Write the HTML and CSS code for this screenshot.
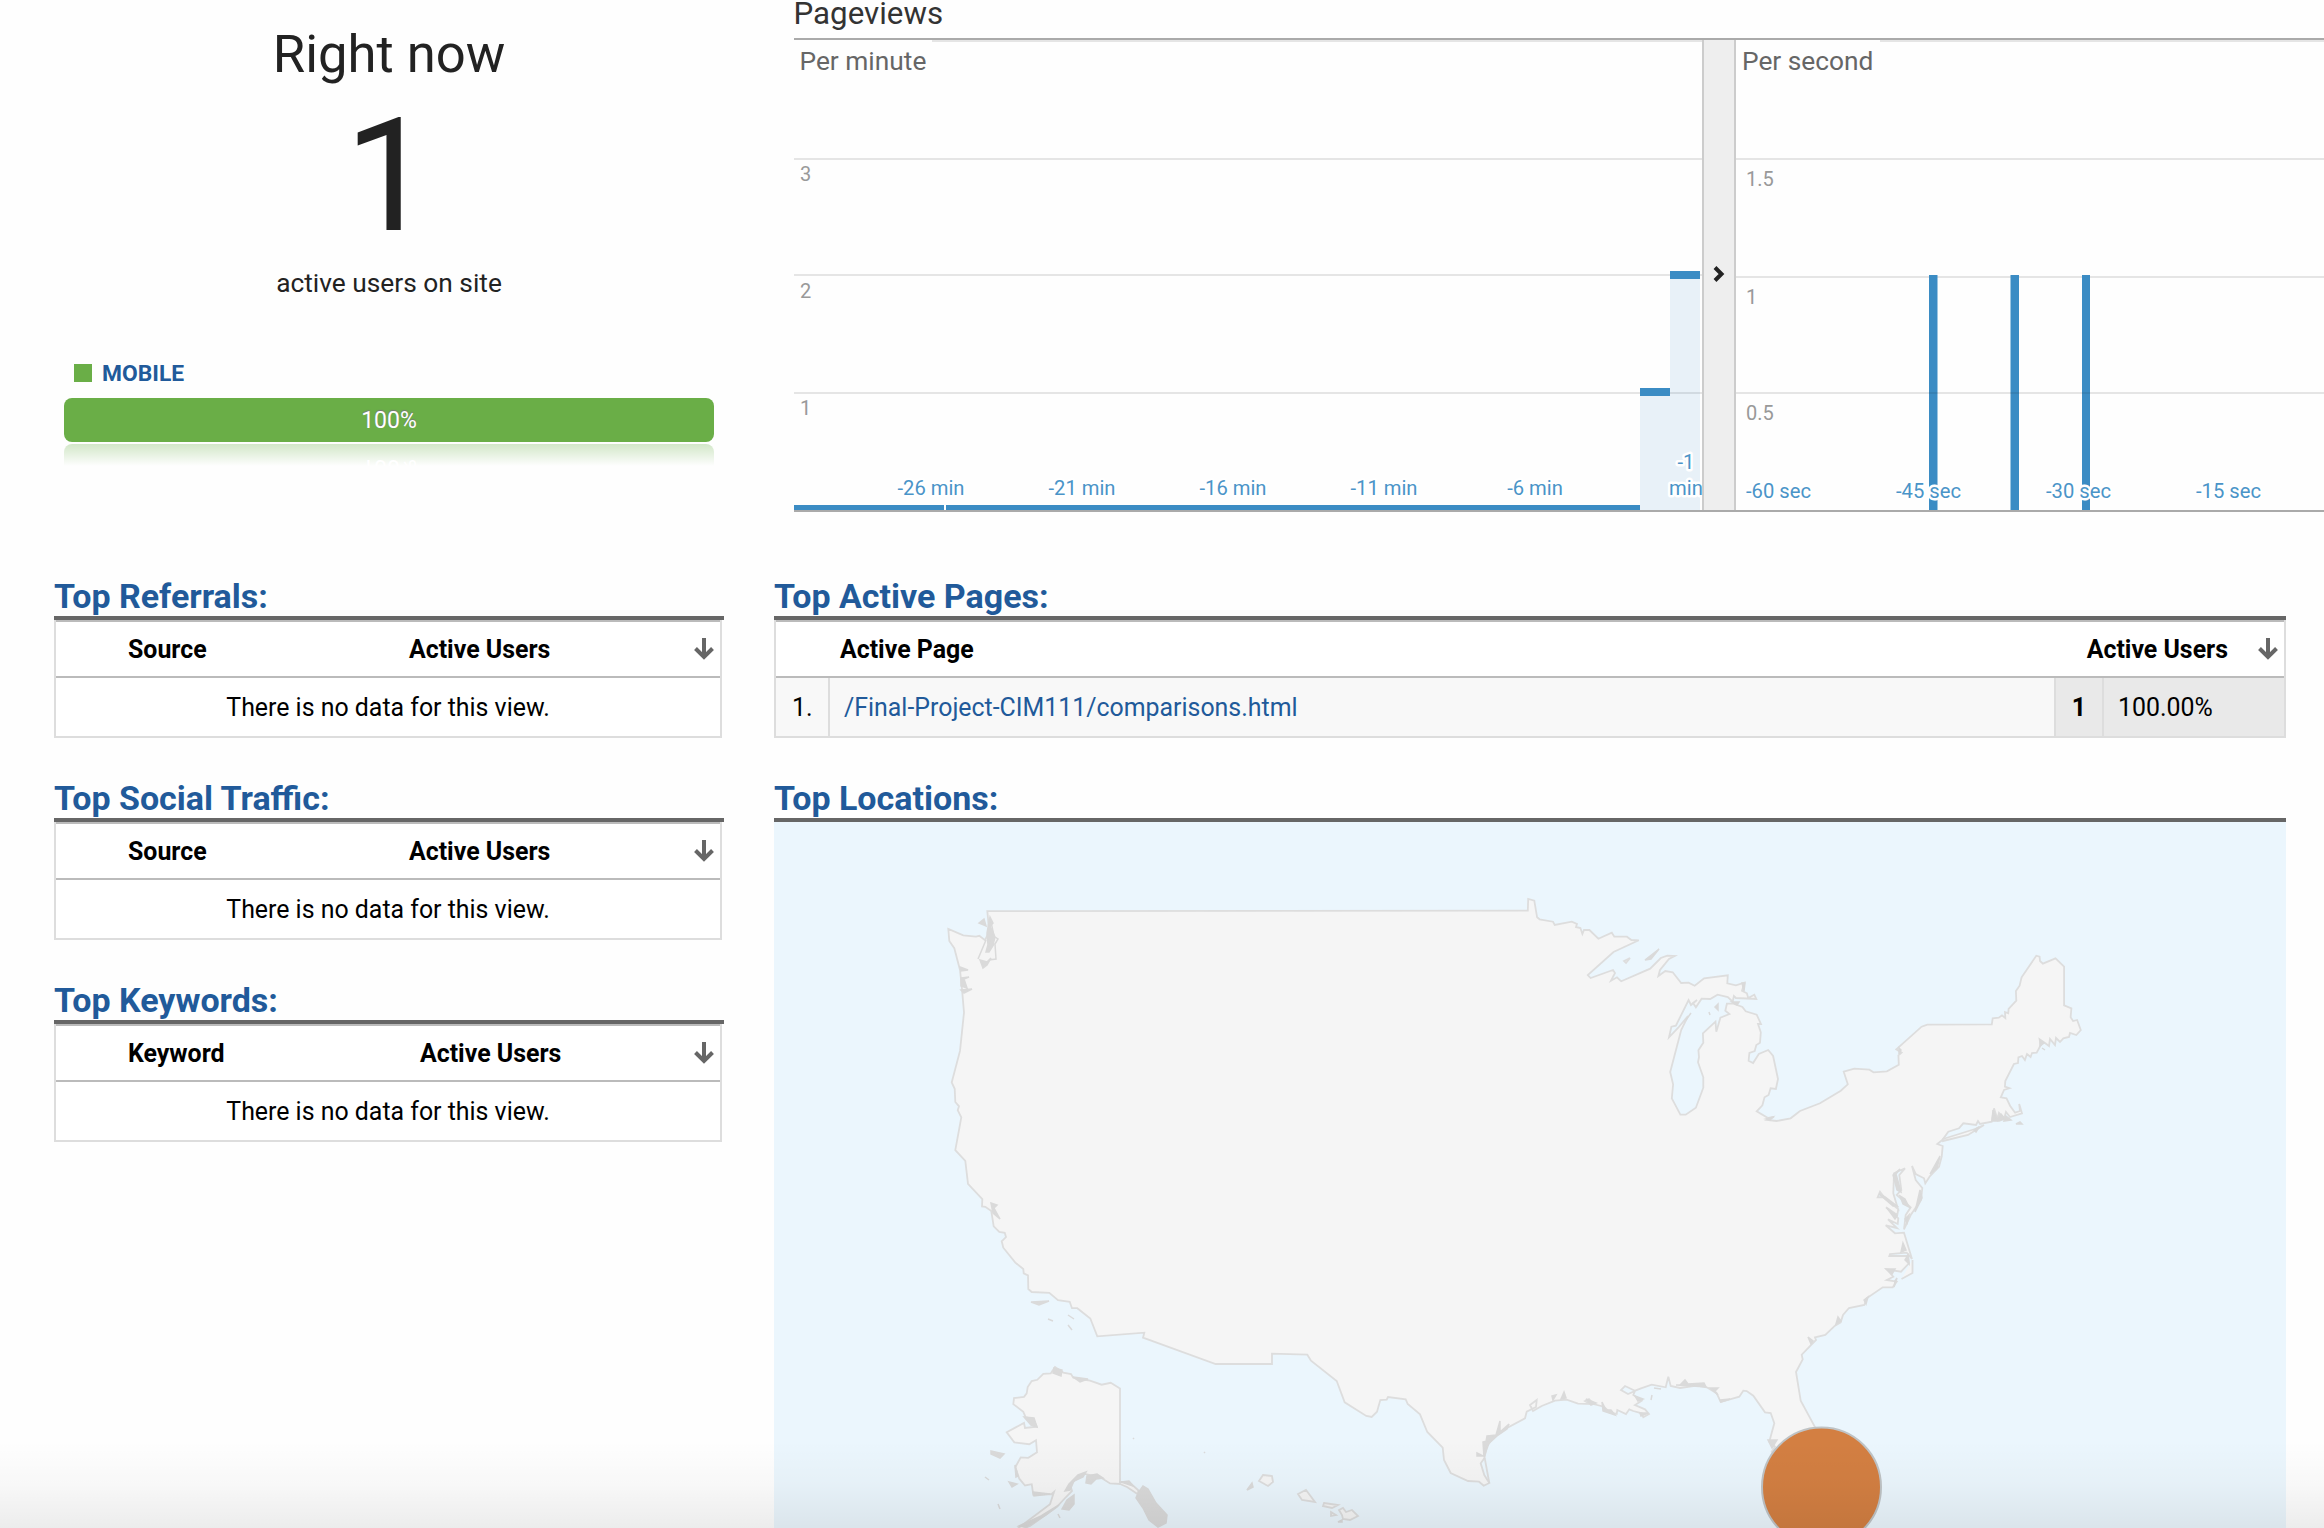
FILE: index.html
```html
<!DOCTYPE html>
<html lang="en">
<head>
<meta charset="utf-8">
<title>Real-time overview</title>
<link rel="stylesheet" href="styles.css">
</head>
<body>
<svg class="defs" width="0" height="0">
  <symbol id="sort" viewBox="0 0 20 22">
    <path d="M10 0v19M1.500 10.500L10 19l8.500-8.500" fill="none" stroke="#666" stroke-width="4"/>
  </symbol>
</svg>
<div class="top">
  <section class="now">
    <div class="now-title">Right now</div>
    <div class="now-count">1</div>
    <div class="now-sub">active users on site</div>
    <div class="legend"><span class="swatch"></span>MOBILE</div>
    <div class="bar">100%</div>
    <div class="reflection"><span>100%</span></div>
  </section>
  <section class="pageviews">
    <svg class="chart" viewBox="794 0 1530 560" width="1530" height="560">
      <text class="c-title" x="793.500" y="24">Pageviews</text>
      <g fill="#e5e5e5">
        <rect x="932" y="40" width="770" height="2"/><rect x="1880" y="40" width="444" height="2"/>
        <rect x="794" y="158" width="908" height="2"/><rect x="794" y="274" width="908" height="2"/><rect x="794" y="392" width="908" height="2"/>
        <rect x="1736" y="158" width="588" height="2"/><rect x="1736" y="276" width="588" height="2"/><rect x="1736" y="392" width="588" height="2"/>
      </g>
      <rect x="1640" y="392" width="30" height="118" fill="#3b8cc4" opacity=".11"/>
      <rect x="1670" y="275" width="30" height="235" fill="#3b8cc4" opacity=".11"/>
      <g fill="#3b8cc4">
        <rect x="1640" y="388" width="30" height="8"/><rect x="1670" y="271" width="30" height="8"/>
        <rect x="794" y="505" width="150" height="5"/><rect x="946" y="505" width="694" height="5"/>
        <rect x="1929" y="275" width="8.500" height="235"/><rect x="2010.500" y="275" width="8.500" height="235"/><rect x="2082" y="275" width="8" height="235"/>
      </g>
      <g fill="#000" opacity=".08">
        <rect x="1929" y="392" width="8.500" height="2"/><rect x="2010.500" y="392" width="8.500" height="2"/><rect x="2082" y="392" width="8" height="2"/>
      </g>
      <g class="c-sub"><text x="799.500" y="70">Per minute</text><text x="1742" y="70">Per second</text></g>
      <g class="c-y">
        <text x="800" y="181">3</text><text x="800" y="298">2</text><text x="800" y="415">1</text>
        <text x="1746" y="186">1.5</text><text x="1746" y="304">1</text><text x="1746" y="420">0.5</text>
      </g>
      <g class="c-x mid">
        <text x="931" y="495">-26 min</text><text x="1082" y="495">-21 min</text><text x="1233" y="495">-16 min</text><text x="1384" y="495">-11 min</text><text x="1535" y="495">-6 min</text>
        <text x="1686" y="469">-1</text><text x="1686" y="495">min</text>
      </g>
      <g class="c-x">
        <text x="1746" y="498">-60 sec</text><text x="1896" y="498">-45 sec</text><text x="2046" y="498">-30 sec</text><text x="2196" y="498">-15 sec</text>
      </g>
      <rect x="1702" y="40" width="34" height="470" fill="#ccc"/><rect x="1704" y="40" width="30" height="470" fill="#eee"/>
      <path d="M1715 267.500l6.500 6.500l-6.500 6.500" fill="none" stroke="#222" stroke-width="4"/>
      <g fill="#aaa"><rect x="794" y="38" width="1530" height="2"/><rect x="794" y="510" width="1530" height="2"/></g>
    </svg>
  </section>
</div>
<div class="columns">
  <div class="col-left">
    <section class="panel">
      <h2>Top Referrals:</h2>
      <div class="table">
        <div class="head"><span class="dim">Source</span><span class="metric">Active Users</span><svg class="sort"><use href="#sort"/></svg></div>
        <div class="empty">There is no data for this view.</div>
      </div>
    </section>
    <section class="panel">
      <h2>Top Social Traffic:</h2>
      <div class="table">
        <div class="head"><span class="dim">Source</span><span class="metric">Active Users</span><svg class="sort"><use href="#sort"/></svg></div>
        <div class="empty">There is no data for this view.</div>
      </div>
    </section>
    <section class="panel">
      <h2>Top Keywords:</h2>
      <div class="table">
        <div class="head keyword"><span class="dim">Keyword</span><span class="metric">Active Users</span><svg class="sort"><use href="#sort"/></svg></div>
        <div class="empty">There is no data for this view.</div>
      </div>
    </section>
  </div>
  <div class="col-right">
    <section class="panel">
      <h2>Top Active Pages:</h2>
      <div class="table">
        <div class="head pages"><span>Active Page</span><span class="metric">Active Users</span><svg class="sort"><use href="#sort"/></svg></div>
        <div class="row"><span class="idx">1.</span><a class="link">/Final-Project-CIM111/comparisons.html</a><b class="num">1</b><span class="pct">100.00%</span></div>
      </div>
    </section>
    <section class="panel">
      <h2>Top Locations:</h2>
      <svg class="map" viewBox="774 822 1512 706" width="1512" height="706">
        <rect x="774" y="822" width="1512" height="706" fill="#ebf6fd"/>
        <g fill="#f5f5f5" stroke="#ddd" stroke-width="1.800">
          <!-- contiguous states -->
          <path d="M987.300 911.100L1527.800 910.700 1528.200 899 1534.300 900.700 1537.100 917.300 1539.600 919.300 1553 921.700 1554.700 925 1571.800 921.700 1577 924 1576 927 1580.400 928 1582.400 934 1584 930 1589.400 930 1598.400 938.700 1611.800 932.700 1614.300 936.700 1626.900 936.700 1631.400 940 1638.800 940.300 1613.500 952 1587.800 975 1590.600 978 1613 970 1615 973 1611 980.700 1617 977.300 1621.200 981.300 1650.200 968.700 1660.800 958 1667.300 955.700 1674.700 956 1669 959 1660 970 1658.400 976 1665.300 971 1672.700 972.300 1681.200 983 1688.600 982.700 1694.700 985.700 1704.100 978.300 1727.800 975.300 1727.300 983.300 1735.900 985.300 1744.500 982.700 1742 990.700 1746.900 993.300 1748.200 998 1754.300 994.700 1756.300 999 1735.900 998 1733.900 996 1732.700 1001.700 1727.800 997 1717.600 994.700 1710.200 999 1701.600 998.700 1695.900 1007.300 1693 1003 1697 1000 1691 1005 1688.600 1000 1675.900 1025.700 1671.400 1026.700 1669 1037.300 1678 1028 1688 1016 1681.200 1030 1670.200 1072 1673.100 1084.300 1671.800 1098.300 1680.400 1114.700 1685.700 1114.700 1695.900 1107.700 1703.300 1087.700 1703.300 1077.300 1698 1062.300 1699 1057 1698.400 1050.300 1703.300 1042.700 1702.900 1033.300 1715.500 1021.700 1716.300 1031.700 1720.400 1017.700 1729.400 1014 1725.300 1010.700 1726.900 1003.700 1732.700 1003.300 1742.400 1007 1745.700 1011.300 1756.700 1014.700 1761 1024 1758 1024 1760.800 1032.300 1760 1042.700 1756.300 1045 1754.700 1051 1749.400 1053 1748.600 1060.700 1753.100 1063 1758.800 1054 1768.200 1050 1773.100 1056 1778 1079 1775.900 1089 1770.600 1088.300 1768.600 1095 1764.500 1097.300 1762.400 1105.300 1756.700 1111.300 1768 1118 1774 1117 1767.300 1120 1776.700 1121 1790.600 1118.300 1800 1111 1820 1103.300 1840.800 1090.700 1847.800 1084.300 1843.700 1071.700 1854.300 1068.700 1869.400 1069.700 1873.500 1072.300 1886.900 1071.300 1898.800 1064.700 1898.400 1055.300 1901.600 1052.700 1896.300 1049.300 1921.600 1026.700 1927.300 1024.700 1991.800 1024.300 1992.700 1018.300 1998.800 1017.700 2002 1015.300 2005.300 1018 2005 1012 2008.200 1013.300 2008.600 1009 2016.300 1000.700 2015.900 991 2019.600 985.700 2021.600 977.300 2036.300 955.700 2039.600 956.700 2040 961 2042.900 963.700 2055.500 958.300 2064.100 966.700 2064.100 1005.300 2071.400 1008.300 2070.600 1017.300 2073.100 1021 2077.100 1020 2080.800 1030 2076.300 1035 2070 1033 2069 1037 2063.300 1038.300 2060 1042 2056 1038 2055 1045 2050 1039 2049 1046 2045 1043 2039.600 1039.300 2040.800 1045 2036.700 1052.700 2032 1053 2030.600 1057 2027 1054 2024.900 1060 2022 1056 2018.400 1057.300 2018 1063 2013.900 1064 2005.300 1081 2004.900 1086.700 2009.400 1088.300 2004 1090 2000.800 1097.300 2006.500 1098.300 2010.200 1106 2015.100 1112.700 2020 1111 2019.200 1104 2022 1113.300 2010 1117 2006 1112 2004 1119 1999 1113 1997.300 1119 1994 1108.300 1991.700 1121.700 1980 1124 1978 1121 1976 1125 1963.300 1123.300 1959 1128.300 1948.300 1131.700 1942.300 1140 1937.300 1144 1942.700 1146 1941.700 1156.700 1939 1166.700 1930 1176 1925.300 1183.300 1924 1178.300 1915.700 1174 1912 1166 1915.700 1180 1922.300 1188 1921 1200 1910.700 1215 1904 1229.300 1905.700 1215 1910.700 1207.300 1896.700 1195 1901.300 1190 1899.300 1175 1905 1168.300 1894 1173.300 1893.300 1193.300 1898 1209 1885 1198.300 1880 1191.700 1877.700 1197.300 1884 1197 1898.300 1209 1897.300 1215 1886 1207.300 1898.300 1218.300 1897.700 1224 1888 1219.300 1897 1228 1885.700 1225.300 1895 1233.300 1904 1232.700 1912 1259 1906.700 1252.700 1890 1254 1889.300 1256 1908 1256 1909 1263.300 1901 1271.700 1886.700 1269.300 1893.300 1276.700 1886.700 1280 1896.700 1281.700 1892.700 1287.300 1882.700 1287.300 1866.700 1298.300 1864.300 1305 1849 1308 1843 1315 1840.700 1322.300 1835 1325.700 1825.300 1335 1815 1337.300 1816 1340 1801.700 1354.700 1802.700 1359.300 1796 1372 1800.700 1400.700 1815 1427 1830 1470 1790 1480 1771.700 1451.700 1775 1446.700 1769.300 1441.700 1774.300 1423.300 1770.700 1413 1765 1412.300 1753.300 1395.700 1746.700 1391 1743.300 1390.700 1739.300 1396.700 1720.700 1402 1716.700 1393.300 1706.700 1387.300 1696.700 1385.700 1680 1388 1670.700 1386 1668.300 1376.700 1665.700 1387.300 1651.700 1384.700 1641 1388.300 1635 1390.700 1625 1386 1621 1390 1628 1394 1635 1391 1633.300 1395 1641.700 1400.700 1635 1405 1645 1409.300 1649 1414 1643.300 1417.300 1641.700 1413.300 1633.300 1411 1629.300 1409.300 1626 1414 1617.300 1410 1616.700 1414 1610 1412.700 1604 1406.700 1593.300 1404 1589 1399 1585 1401 1590 1404 1578 1403.700 1566.700 1399.700 1555 1400.700 1541.700 1406 1533 1411 1530 1405 1536.700 1400 1536 1407 1526.700 1411.700 1525 1418.300 1503.300 1430 1492.700 1438.300 1486.700 1446.700 1484.300 1458.300 1480.700 1463.300 1484.300 1475 1489.300 1483 1483.700 1485.700 1479 1481.700 1468 1481 1450.700 1473 1444 1460 1442.700 1447.700 1427.300 1432 1420 1414.300 1407.700 1404 1405.700 1399.300 1388 1397 1386.700 1399.700 1380.300 1400 1377 1411.700 1371.700 1417 1366.300 1416 1344.700 1402.300 1336.700 1381 1311 1360.700 1307.300 1354.700 1272 1353.700 1272 1364 1215.700 1364 1143 1337.700 1144.300 1332.700 1097.300 1336.400 1090.300 1318.500 1077.300 1308.200 1072 1308.200 1069.700 1301.800 1058 1300.100 1049.300 1292.900 1031.700 1292 1028.300 1289 1028 1275.400 1023.700 1273.300 1023.300 1269 1015.300 1262.600 1003.300 1247.700 1001.700 1241.300 1006 1237.100 1004.700 1232.800 999.300 1232 993.700 1226.400 991.300 1211.100 985.300 1206.800 982 1206.400 982.300 1199.200 968 1183.800 965.300 1160.800 955.300 1150.200 961.300 1117.400 957.700 1110.100 959 1106.300 955.300 1102 954.700 1088.800 951.700 1082.400 960 1050.900 964 1012.500 962 989 960 970 954.300 948.200 949.300 941 948.300 929 963.300 935.400 976 936.700 979.300 935.800 985 940.100 989 932 988 918Z"/>
          <path d="M1489.300 1483L1484.700 1458M1912.500 1260v13l-11 6M1943 1139l32-10 9-4-16 10-25 6zM1624 961l6-3-4 5z"/>
          <!-- Alaska -->
          <path d="M1120 1388.400L1110.700 1382.800 1101.700 1384.700 1090 1380.700 1080 1379 1073.300 1377.700 1071 1374 1063.300 1372.600 1055 1367 1050.700 1373.400 1043.300 1373.900 1037.300 1379.800 1031.700 1381.100 1027.700 1387.100 1026.700 1393.400 1024 1396.900 1014 1398.100 1013.300 1404.100 1023.300 1411.800 1025.700 1417.300 1033.300 1419 1036.700 1426.700 1025 1428 1024 1422.900 1006.700 1432.200 1014.300 1442.400 1029.300 1444.200 1036 1440.300 1037 1452.300 1028.300 1457.800 1020.700 1457.400 1015.300 1467.200 1019.300 1478.700 1025 1485.500 1031.700 1484.200 1033.300 1494.900 1051.700 1494 1054 1491.900 1050 1504.200 1020 1526.800 1014 1532 1030 1526 1056.700 1507 1066 1497 1072 1491 1070 1484.200 1083.300 1473.600 1100 1477 1110 1483.400 1120 1484Z"/>
          <path d="M1120 1482l9 0 9 8 1 5-12-8-7-3z"/>
          <!-- Hawaii -->
          <path d="M1263 1475l9 1 1 6-5 4-9-5zM1298 1494l8-4 9 12-13-2zM1324 1503l14 2-6 3-9-2zM1331 1512l5 3-5 1zM1339 1510l4-2 3 4 6-2 6 6-8 4-7-1-1-4z"/>
        </g>
        <g fill="#dadada" stroke="#dadada" stroke-width="1.500">
          <path d="M979 923l5-4 2 7zM990 917l3 6-3 3 5 11-2 8-5 0-1-12zM989 941l5 3-5 8-3 0zM980 960l7 2 4-4-4 7-4 3zM960 967l8 3-7 1zM961 978l8-1-5 2 3 9-6-2zM961 990l11-1-8 4zM991 1203l6 2-3 3 6 11-7-6zM1031 1302l18-1-10 4zM1048 1319l5 2zM1068 1315l6 4zM1068 1325l4 5z"/>
          <path d="M978 959l8-19M995 937l3 2-3 5 1 15-7 1M991 922l3 14" fill="none"/>
          <path d="M1645 960l14-11-8 10zM1686 1020l5-7zM1715 1007l3-3v6zM1709 1012l1 3zM1732 1002h7l-2 3zM1742 983l3 0-1 8zM1901 1050l-2-2v6zM1766 1119l7-2-3 3zM2040 1040l4 3-4 3zM2042 1048l3 2zM1993 1110l4 10 4-6 4 5-6 2h-7zM2006 1116l5 4-7 1zM2016 1124l6 0-2-2z"/>
          <path d="M1893 1175l7-6-4 5 5 18-4-2zM1900 1196l5 3 4 8-6-3zM1905 1219l4-4-2 8zM1879 1194l6 3 12 9-4 0zM1887 1208l10 8-2 3zM1886 1269l9 0-3 5zM1895 1281l2-3-3 9zM1903 1243l3 7-5 2zM1908 1255l1 9-4-4zM1920 1190l2 8-7 14zM1940 1156l-3 12-7 6zM1974 1130l5-3-3 5zM1864 1300l4-3-2 7zM1838 1317l3 4-5 3zM1808 1337l5 4-2 3zM1768 1440l9 0-5 8z"/>
          <path d="M1477 1453l6 3-6 0zM1483 1442l7-2-6 17zM1487 1436l9-1 4-14 0 11 9-8-2 5-10 7-12 11zM1552 1396l4-1-3 5zM1564 1392l2 6-5 1zM1602 1402l4 8 5 0 4 5-12-4zM1635 1396l8 3-5 2zM1640 1413l8 0-7 3zM1676 1385l4 0 5-5 3 4 16-1 2 4zM1710 1388l8 0-3 3 3 4zM1720 1400l10-1-9 3zM1586 1399l10 4-5 2zM1654 1388l7 1zM1652 1395l-1 5z"/>
          <path d="M1054 1368l8 2-1 6-8-3zM1073 1377l15 2-8 3zM1024 1417l10 1 3 9-6-2zM991 1451l13 3-4 4-9-4zM985 1477l4 3zM1009 1482l8 2-5 3zM998 1504l2 5zM1015 1465l3 11-2 1zM1033 1492l17 2-16 2zM1133 1438l1 1zM1204 1452l1 1zM1247 1490l5-7 1 4zM1338 1522l4-2v2z"/>
          <path d="M1069 1484l9-9 8-3-3 5-9 4-4 9-5 1zM1087 1476l10-2 6 4-7 1-5 5-5-1zM1062 1509l5-9 7-5 0 9-5 6zM1019 1526l22-10 18-11-13 10-20 12zM1058 1514l2 4zM1138 1493l5-7 5 3 8 14 11 12-1 8-8 4-9-7-6-12-7-10zM1121 1482l8-1 4 5z"/>
        </g>
        <circle cx="1821.500" cy="1487" r="59.500" fill="#d37f42" stroke="#bfc3c5" stroke-width="2"/>
      </svg>
    </section>
  </div>
</div>
<div class="fade"></div>
</body>
</html>
```
FILE: styles.css
```css
* { box-sizing: border-box; }
body {
  margin: 0;
  width: 2324px;
  height: 1528px;
  overflow: hidden;
  position: relative;
  background: #fefefe;
  color: #000;
  font: 24.9px Roboto, sans-serif;
}
.defs { display: none; }
.top { display: flex; height: 560px; }
.now {
  width: 794px;
  padding: 24px 80px 0 64px;
  color: #222;
}
.now-title { font-size: 52.6px; line-height: 60px; text-align: center; }
.now-count { margin-top: 12px; font-size: 158px; line-height: 160px; text-align: center; }
.now-sub { margin-top: 11px; font-size: 26.3px; line-height: 32px; text-align: center; }
.legend {
  display: flex;
  align-items: center;
  gap: 10px;
  margin-top: 62px;
  padding-left: 10px;
  font-size: 22.8px;
  font-weight: 700;
  line-height: 26px;
  color: #215a9a;
}
.swatch { width: 18px; height: 18px; margin-top: -2px; background: #6aae47; }
.bar {
  height: 44px;
  margin-top: 11px;
  border-radius: 8px;
  background: #6aae47;
  color: #fff;
  font-size: 23px;
  line-height: 46px;
  text-align: center;
  text-shadow: 0 -1px 1px #777;
}
.reflection {
  height: 22px;
  margin-top: 2px;
  border-radius: 8px 8px 0 0;
  overflow: hidden;
  background: linear-gradient(#d2e7c8, #fefefe);
  color: #fff;
  font-size: 23px;
  line-height: 46px;
  text-align: center;
}
.reflection span { display: block; transform: scaleY(-1); }
.pageviews { width: 1530px; }
.chart { display: block; }
.c-title { font-size: 31.3px; fill: #333; }
.c-sub { font-size: 26.3px; fill: #666; }
.c-y { font-size: 20px; fill: #999; }
.c-x { font-size: 20.2px; fill: #4a94c8; stroke: #fff; stroke-width: 5px; paint-order: stroke; stroke-linejoin: round; }
.mid { text-anchor: middle; }

.columns { display: flex; gap: 50px; padding-left: 54px; }
.col-left { width: 670px; }
.col-right { width: 1512px; }
.panel { margin-bottom: 24px; }
h2 {
  height: 60px;
  margin: 0;
  padding-top: 16px;
  border-bottom: 4px solid #666;
  font-size: 34px;
  font-weight: 700;
  line-height: 40px;
  color: #215a9a;
}
.table { height: 118px; border: 2px solid #ddd; border-top: 0; background: #fff; }
.col-left .table { width: 668px; }
.head {
  display: flex;
  height: 58px;
  padding: 1px 6px 0 72px;
  border-top: 2px solid #bbb;
  border-bottom: 2px solid #bbb;
  font-size: 24.9px;
  font-weight: 700;
  line-height: 54px;
}
.dim { width: 281px; }
.keyword .dim { width: 292px; }
.sort { width: 20px; height: 22px; margin: 15px 0 0 auto; }
.empty { height: 58px; padding-top: 1px; line-height: 58px; text-align: center; }
.pages { padding-left: 64px; }
.pages .metric { margin-left: auto; }
.pages .sort { margin-left: 30px; }
.row { display: flex; height: 58px; line-height: 60px; background: #f8f8f8; }
.idx { width: 54px; padding-left: 16px; border-right: 2px solid #ddd; }
.link { flex: 1; padding-left: 14px; color: #215a9a; }
.num { width: 50px; padding-right: 16px; border: solid #ddd; border-width: 0 2px; background: #e9e9e9; text-align: right; }
.pct { width: 180px; padding-left: 14px; background: #e9e9e9; }
.map { display: block; }
.fade {
  position: absolute;
  left: 0;
  right: 0;
  bottom: 0;
  height: 88px;
  background: linear-gradient(rgba(0, 0, 0, 0), rgba(0, 0, 0, .025) 50%, rgba(0, 0, 0, .07));
}
```
